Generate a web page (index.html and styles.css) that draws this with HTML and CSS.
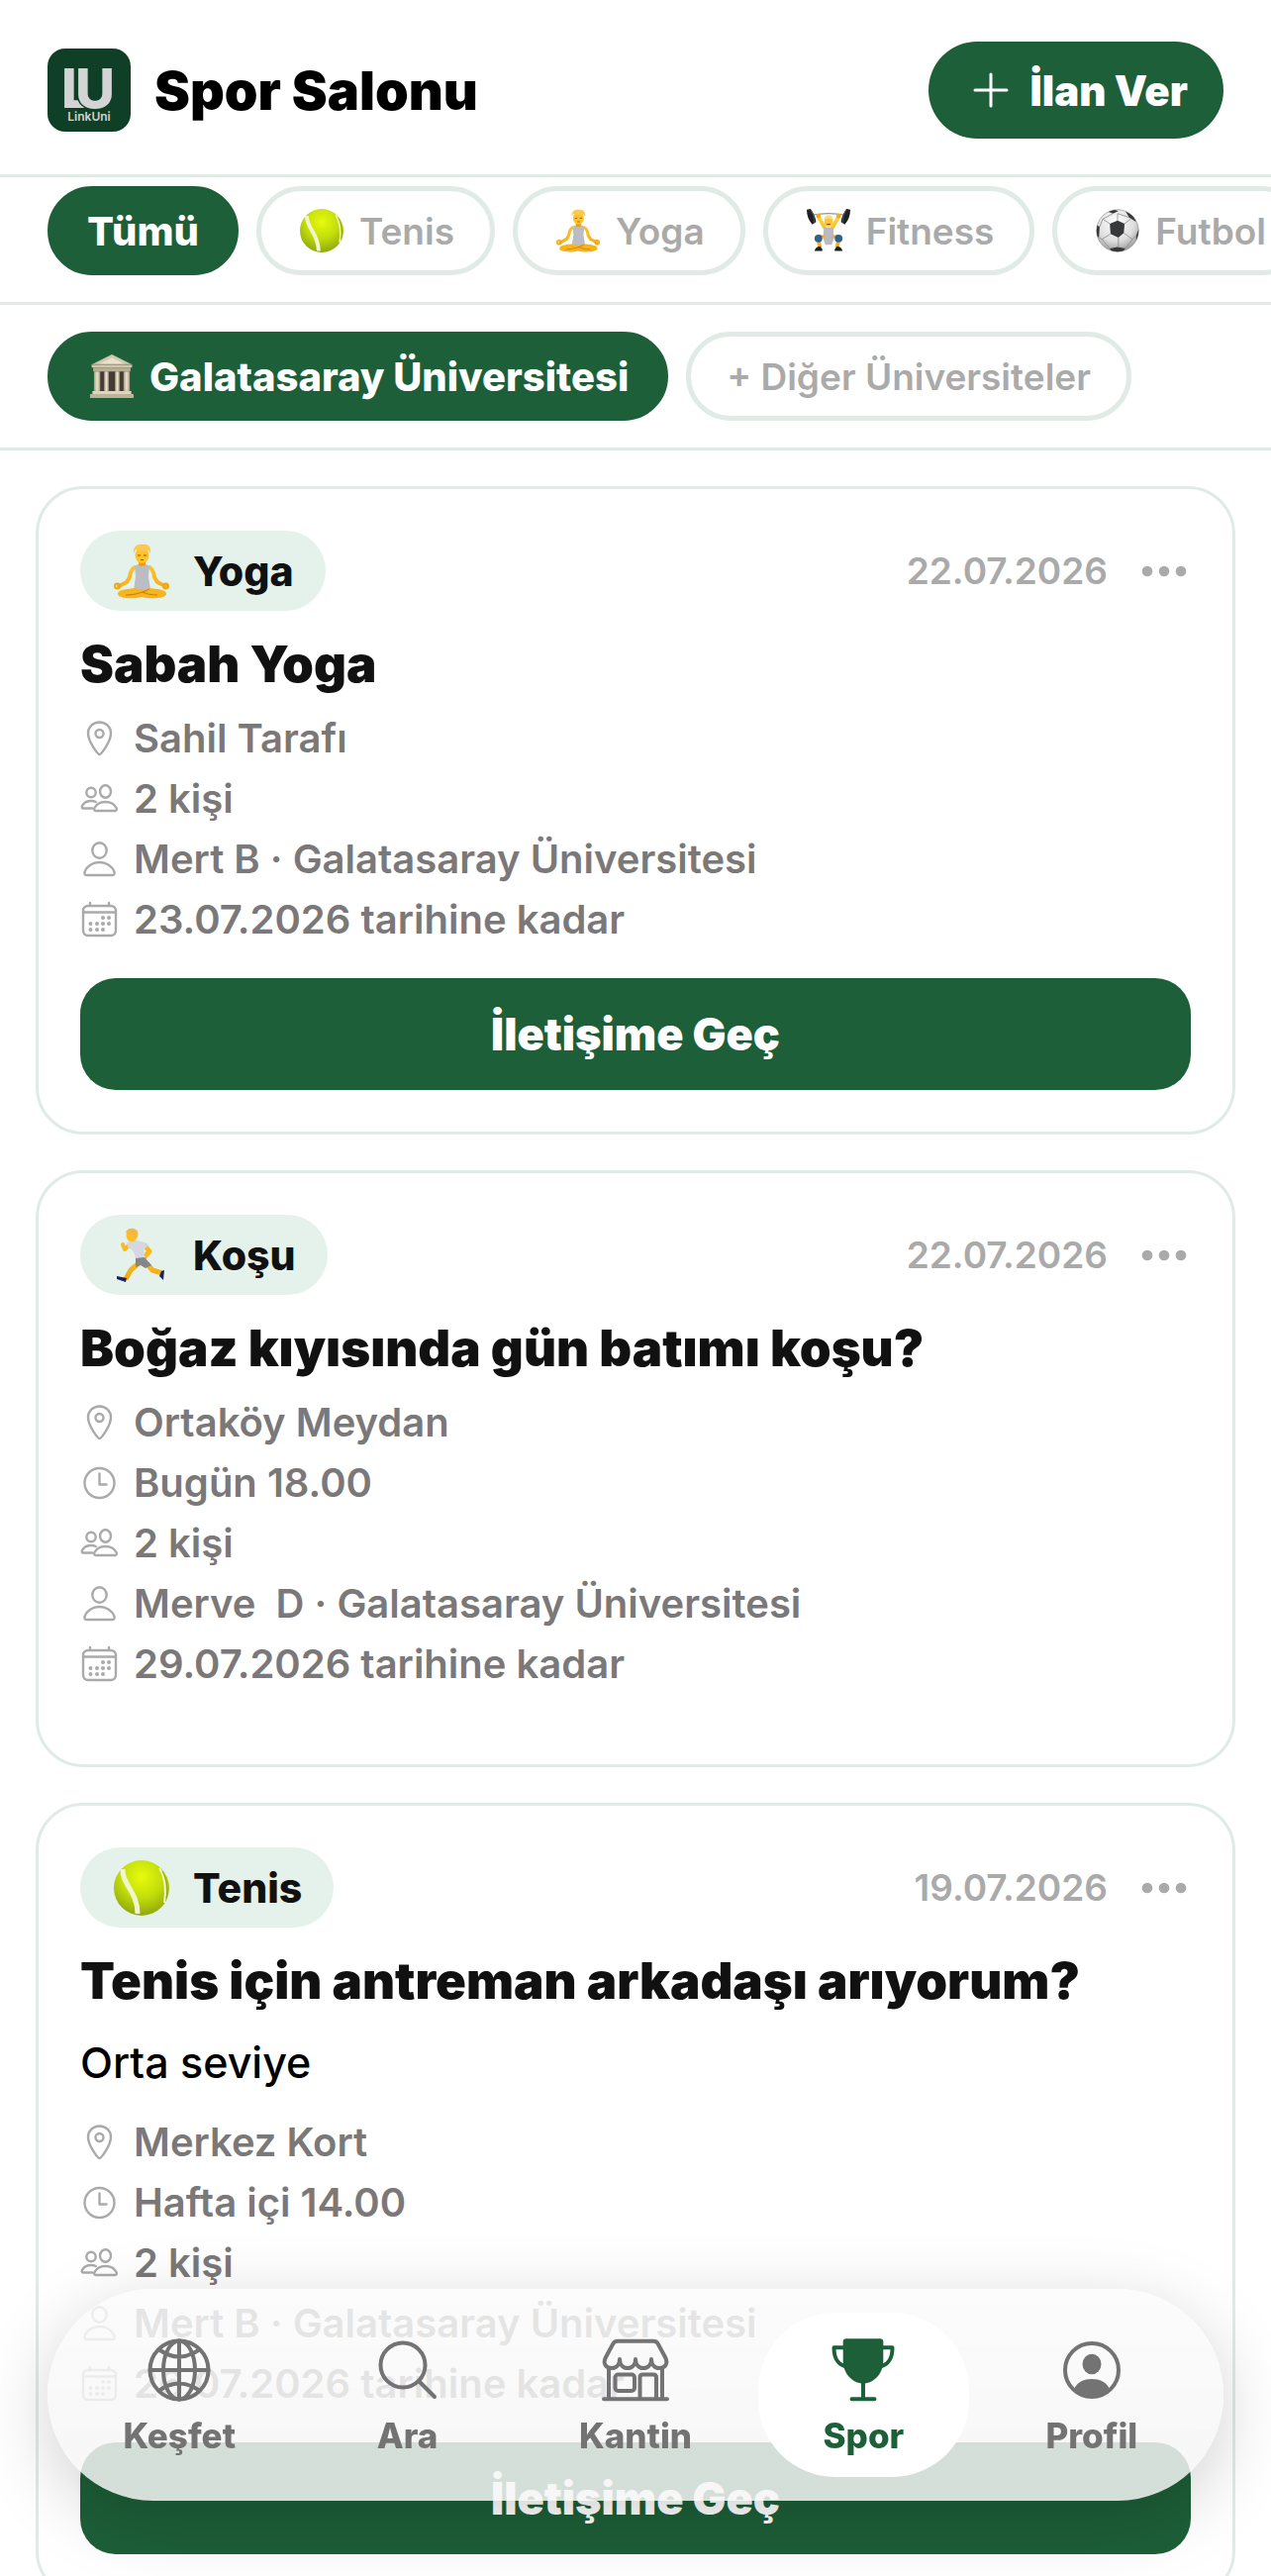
FILE: index.html
```html
<!DOCTYPE html>
<html lang="tr">
<head>
    <meta charset="UTF-8">
    <meta name="viewport" content="width=device-width, initial-scale=1.0">
    <title>Spor Salonu - LinkUni</title>
    <link rel="stylesheet" href="styles.css">
</head>
<body>

<!-- Shared icons -->
<svg class="sprite" aria-hidden="true">
    <defs>
        <radialGradient id="ball-green" cx="50%" cy="30%" r="75%">
            <stop offset="0" stop-color="#e6fb0c"/>
            <stop offset="0.5" stop-color="#c3dd0b"/>
            <stop offset="1" stop-color="#87a00f"/>
        </radialGradient>
        <radialGradient id="ball-white" cx="45%" cy="30%" r="75%">
            <stop offset="0" stop-color="#ffffff"/>
            <stop offset="0.6" stop-color="#dedede"/>
            <stop offset="1" stop-color="#8e8e8e"/>
        </radialGradient>
        <linearGradient id="skin" gradientUnits="userSpaceOnUse" x1="0" y1="10" x2="0" y2="56">
            <stop offset="0" stop-color="#ffcf3a"/>
            <stop offset="1" stop-color="#f2a60c"/>
        </linearGradient>
        <linearGradient id="stone" x1="0" y1="0" x2="1" y2="0">
            <stop offset="0" stop-color="#a39a80"/>
            <stop offset="0.5" stop-color="#ece5d0"/>
            <stop offset="1" stop-color="#a39a80"/>
        </linearGradient>
        <clipPath id="ball-clip"><circle cx="28" cy="28" r="27"/></clipPath>
    </defs>

    <symbol id="e-tennis" viewBox="0 0 56 56">
        <circle cx="28" cy="28" r="28" fill="url(#ball-green)"/>
        <path d="M9 9C8 24 24 32 24 54" fill="none" stroke="#f3f6cd" stroke-width="5"/>
        <path d="M46 8C52 17 53 32 51 43" fill="none" stroke="#f3f6cd" stroke-width="2"/>
        <path d="M49 11C54 20 55 31 53 38" fill="none" stroke="#8ba510" stroke-width="1"/>
    </symbol>

    <symbol id="e-yoga" viewBox="0 0 56 56">
        <path d="M21 24Q17 26 16 34L13 39 5 43" fill="none" stroke="url(#skin)" stroke-width="4" stroke-linecap="round" stroke-linejoin="round"/>
        <path d="M36 24Q40 26 41 34L44 39 52 43" fill="none" stroke="url(#skin)" stroke-width="4" stroke-linecap="round" stroke-linejoin="round"/>
        <path d="M25 17h7v6h-7z" fill="#e99e14"/>
        <path d="M21 23q2-1 3-2 4 4 9 0 1 1 3 2l-1 10 2 14H20l2-14z" fill="#bcbcc4"/>
        <circle cx="3.500" cy="43" r="2.500" fill="none" stroke="#f0a70f" stroke-width="2"/>
        <circle cx="52.500" cy="43" r="2.500" fill="none" stroke="#f0a70f" stroke-width="2"/>
        <path d="M4 51c0-5 12-5 17-6 6 2 11 2 15 0 6 1 17 1 17 6 0 5-18 5-25 3-7 2-24 2-24-3z" fill="#f7b51c"/>
        <path d="M12 52c8 0 16-2 24-6M44 52c-6 0-11-1-15-3" fill="none" stroke="#c9790a" stroke-width="1"/>
        <ellipse cx="28.500" cy="12" rx="7" ry="8" fill="#ffc229"/>
        <path d="M20 10c-1-6 3-10 9-9 6-1 9 3 8 9l-2-3c-4 1-9 1-13-1z" fill="#f9c855"/>
        <path d="M24 12h3M30 12h3M27 16.500h3" stroke="#8a5208" stroke-width="1"/>
    </symbol>

    <symbol id="e-lift" viewBox="0 0 56 56">
        <path d="M6 8Q28 4 50 8" fill="none" stroke="#8f959c" stroke-width="1.500"/>
        <path d="M15 10L23 24M41 10L33 24" stroke="url(#skin)" stroke-width="5" stroke-linecap="round"/>
        <circle cx="15" cy="9" r="3" fill="#f3ab14"/>
        <circle cx="41" cy="9" r="3" fill="#f3ab14"/>
        <path d="M15 40L17 50M41 40L39 50" stroke="#f5b01a" stroke-width="5"/>
        <path d="M22 24h12l1 14-3 8h-8l-3-8z" fill="#b9bac2"/>
        <ellipse cx="28" cy="16" rx="5.500" ry="7" fill="#ffc62c"/>
        <path d="M22 14q1-6 6-6t6 6q-6-3-12 0z" fill="#f6dc83"/>
        <path d="M25 19q3 3 6 0z" fill="#8b3d0a"/>
        <path d="M23 36l-8-1M33 36l8-1" stroke="#f5b01a" stroke-width="4"/>
        <circle cx="15" cy="38" r="5" fill="#2d6293"/>
        <circle cx="41" cy="38" r="5" fill="#2d6293"/>
        <path d="M10 54q1-5 7-6l3 4v2zM46 54q-1-5-7-6l-3 4v2z" fill="#1b1d22"/>
        <path d="M0 1l5-1q6 8 7 17l-5 3Q0 12 0 1zM56 1l-5-1q-6 8-7 17l5 3q7-8 7-19z" fill="#1d1f21"/>
        <path d="M5 1q5 8 5 17M51 1q-5 8-5 17" fill="none" stroke="#62676b" stroke-width="1"/>
    </symbol>

    <symbol id="e-football" viewBox="0 0 56 56">
        <circle cx="28" cy="28" r="27" fill="url(#ball-white)" stroke="#9a9a9a"/>
        <g clip-path="url(#ball-clip)">
            <path d="M18 19l10-4 9 4-1 12-7 6-10-5z" fill="#37383a"/>
            <path d="M14 3q8-4 15 0l-7 3zM38 3l10 5 4 9-9-6zM0 20l5 3-1 14-5-4zM56 24l-4 10 0 9 6-6zM18 51l10-2 10 2-5 6H22z" fill="#37383a"/>
            <path d="M28 15V6M37 19l8-6M36 31l11 8M29 37v12M19 32L8 39M18 19L9 13M5 23l4-10 13-7M43 11l-15-5M8 39l10 12M47 39l-9 12M52 34l-5 5M4 37l4 2" fill="none" stroke="#8a8a8a"/>
        </g>
    </symbol>

    <symbol id="e-museum" viewBox="0 0 56 56">
        <path d="M6 21h44v27H6z" fill="#453d35"/>
        <path d="M28 0L54 13v4H2v-4z" fill="#cfc7ae"/>
        <path d="M28 4L46 13H10z" fill="#e9e2cd"/>
        <path d="M2 13h52" stroke="#7d755f" stroke-width="1"/>
        <path d="M4 17h48v5H4z" fill="#b7ae94"/>
        <path d="M5 22h8v25H5z" fill="url(#stone)"/>
        <path d="M18 22h6v25h-6z" fill="url(#stone)"/>
        <path d="M32 22h6v25h-6z" fill="url(#stone)"/>
        <path d="M43 22h8v25h-8z" fill="url(#stone)"/>
        <path d="M3 47h50v4H3z" fill="#ddd5bd"/>
        <path d="M0 51h56v5H0z" fill="#bcb398"/>
    </symbol>

    <symbol id="e-run" viewBox="0 0 56 56">
        <path d="M33 36L39 43 49 46" fill="none" stroke="url(#skin)" stroke-width="5" stroke-linejoin="round"/>
        <path d="M25 36L17 43 12 52" fill="none" stroke="url(#skin)" stroke-width="5" stroke-linejoin="round"/>
        <path d="M14 19L11 22 9 17" fill="none" stroke="#f9b91f" stroke-width="4" stroke-linecap="round" stroke-linejoin="round"/>
        <path d="M31 18L36 24 30 31" fill="none" stroke="#f9b91f" stroke-width="5" stroke-linecap="round" stroke-linejoin="round"/>
        <path d="M13 15q8-4 18 0l3 4-4 3 2 10-10 2q0-8-4-12-4 0-5-7z" fill="#d7d8df"/>
        <path d="M22 31l9-1 7 8-6 3-5-3-5 2z" fill="#85858d"/>
        <ellipse cx="18" cy="8" rx="5.500" ry="6.500" fill="#fdbe27"/>
        <path d="M12 5q2-5 8-4 6 1 4 9l-3 1-2-5q-4 1-7-1z" fill="#f0b845"/>
        <path d="M3 49l10 2-1 4-9-3zM48 44l3-1-1 10-4-4z" fill="#1b2359"/>
    </symbol>

    <symbol id="i-pin" viewBox="0 0 38 38">
        <path d="M19.500 35C18 35 8 22.500 8 13.500a11.500 11 0 0 1 23 0C31 22.500 21 35 19.500 35z"/>
        <circle cx="19.500" cy="14" r="4"/>
    </symbol>
    <symbol id="i-clock" viewBox="0 0 38 38">
        <circle cx="19.500" cy="19" r="15"/>
        <path d="M19.500 9.500V20.500H26.500"/>
    </symbol>
    <symbol id="i-people" viewBox="0 0 38 38">
        <circle cx="11" cy="12.500" r="4.700"/>
        <ellipse cx="25.500" cy="11.500" rx="5.500" ry="6.200"/>
        <path d="M15.500 31C14 31 13.800 29.500 14.500 28 16.500 24 20.500 22 25.500 22S34.500 24 36.500 28C37.200 29.500 37 31 35.500 31z"/>
        <path d="M12 28.500H3C1.500 28.500 1.500 27 2.200 25.600 4 22.500 7 21 11 21 13 21 14.500 21.400 15.800 22"/>
    </symbol>
    <symbol id="i-person" viewBox="0 0 38 38">
        <ellipse cx="19.500" cy="10" rx="7.200" ry="7.800"/>
        <path d="M6.500 35C4.500 35 4 33.500 4.600 31.500 6.500 26 12.500 22 19.500 22S32.500 26 34.400 31.500C35 33.500 34.500 35 32.500 35z"/>
    </symbol>
    <symbol id="i-calendar" viewBox="0 0 38 38">
        <rect x="3" y="5" width="33" height="30" rx="5"/>
        <path d="M3 11.500H36M10 2V5M29 2V5"/>
        <path class="dots" d="M23 17h0M29 17h0M10.500 23h0M17 23h0M23 23h0M29 23h0M10.500 29h0M17 29h0M23 29h0"/>
    </symbol>
    <symbol id="i-more" viewBox="0 0 54 54">
        <circle cx="10" cy="27" r="5.300"/>
        <circle cx="27" cy="27" r="5.300"/>
        <circle cx="44" cy="27" r="5.300"/>
    </symbol>
</svg>

<header class="header">
    <svg class="logo" viewBox="0 0 84 84" role="img" aria-label="LinkUni">
        <rect width="84" height="84" rx="18" fill="#0f3f26"/>
        <text class="logo-letter" x="14" y="60">L</text>
        <text class="logo-letter" x="28" y="60">U</text>
        <text class="logo-name" x="42" y="73">LinkUni</text>
    </svg>
    <h1 class="page-title">Spor Salonu</h1>
    <button type="button" class="create-button">
        <svg viewBox="0 0 54 54"><path d="M27 11V43M11 27H43"/></svg>
        İlan Ver
    </button>
</header>

<div class="chip-row sports">
    <button type="button" class="chip active">Tümü</button>
    <button type="button" class="chip"><svg class="emoji"><use href="#e-tennis"/></svg>Tenis</button>
    <button type="button" class="chip"><svg class="emoji"><use href="#e-yoga"/></svg>Yoga</button>
    <button type="button" class="chip"><svg class="emoji"><use href="#e-lift"/></svg>Fitness</button>
    <button type="button" class="chip"><svg class="emoji"><use href="#e-football"/></svg>Futbol</button>
</div>

<div class="chip-row">
    <button type="button" class="chip active"><svg class="emoji"><use href="#e-museum"/></svg>Galatasaray Üniversitesi</button>
    <button type="button" class="chip">+ Diğer Üniversiteler</button>
</div>

<main class="list">
    <article class="card">
        <div class="card-top">
            <span class="badge"><svg class="badge-emoji"><use href="#e-yoga"/></svg>Yoga</span>
            <time class="date">22.07.2026</time>
            <button type="button" class="more" aria-label="Seçenekler"><svg><use href="#i-more"/></svg></button>
        </div>
        <h2 class="card-title">Sabah Yoga</h2>
        <ul class="details">
            <li><svg><use href="#i-pin"/></svg>Sahil Tarafı</li>
            <li><svg><use href="#i-people"/></svg>2 kişi</li>
            <li><svg><use href="#i-person"/></svg>Mert B · Galatasaray Üniversitesi</li>
            <li><svg><use href="#i-calendar"/></svg>23.07.2026 tarihine kadar</li>
        </ul>
        <button type="button" class="contact-button">İletişime Geç</button>
    </article>

    <article class="card">
        <div class="card-top">
            <span class="badge"><svg class="badge-emoji"><use href="#e-run"/></svg>Koşu</span>
            <time class="date">22.07.2026</time>
            <button type="button" class="more" aria-label="Seçenekler"><svg><use href="#i-more"/></svg></button>
        </div>
        <h2 class="card-title">Boğaz kıyısında gün batımı koşu?</h2>
        <ul class="details">
            <li><svg><use href="#i-pin"/></svg>Ortaköy Meydan</li>
            <li><svg><use href="#i-clock"/></svg>Bugün 18.00</li>
            <li><svg><use href="#i-people"/></svg>2 kişi</li>
            <li><svg><use href="#i-person"/></svg>Merve&nbsp; D · Galatasaray Üniversitesi</li>
            <li><svg><use href="#i-calendar"/></svg>29.07.2026 tarihine kadar</li>
        </ul>
    </article>

    <article class="card">
        <div class="card-top">
            <span class="badge"><svg class="badge-emoji"><use href="#e-tennis"/></svg>Tenis</span>
            <time class="date">19.07.2026</time>
            <button type="button" class="more" aria-label="Seçenekler"><svg><use href="#i-more"/></svg></button>
        </div>
        <h2 class="card-title">Tenis için antreman arkadaşı arıyorum?</h2>
        <p class="description">Orta seviye</p>
        <ul class="details">
            <li><svg><use href="#i-pin"/></svg>Merkez Kort</li>
            <li><svg><use href="#i-clock"/></svg>Hafta içi 14.00</li>
            <li><svg><use href="#i-people"/></svg>2 kişi</li>
            <li><svg><use href="#i-person"/></svg>Mert B · Galatasaray Üniversitesi</li>
            <li><svg><use href="#i-calendar"/></svg>26.07.2026 tarihine kadar</li>
        </ul>
        <button type="button" class="contact-button">İletişime Geç</button>
    </article>
</main>

<nav class="tab-bar">
    <a href="#kesfet" class="tab">
        <svg viewBox="0 0 66 66">
            <circle cx="33" cy="33" r="29.500"/>
            <ellipse cx="33" cy="33" rx="16" ry="29.500"/>
            <path d="M33 3.500V62.500M3.500 33H62.500M13 12.500Q33 26.500 53 12.500M13 53.500Q33 39.500 53 53.500"/>
        </svg>
        Keşfet
    </a>
    <a href="#ara" class="tab">
        <svg viewBox="0 0 66 66">
            <circle cx="28" cy="28" r="22.500"/>
            <path d="M44.500 44.500L60 60"/>
        </svg>
        Ara
    </a>
    <a href="#kantin" class="tab">
        <svg viewBox="0 0 66 66">
            <path d="M15 3.700H51Q54.500 3.700 56 7L63 20C66.500 27 62.500 31 57 31 52 31 49 27 49 22 49 27 46 31 41 31S33 27 33 22C33 27 30 31 25 31S17 27 17 22C17 27 14 31 9 31 3.500 31-.500 27 3 20L10 7Q11.500 3.700 15 3.700z"/>
            <path d="M6 31V62M60 31V62M1 62.300H65"/>
            <rect x="12.500" y="37.500" width="19.500" height="16.500" rx="3"/>
            <path d="M37.500 62V40.500Q37.500 37.500 40.500 37.500H51Q54 37.500 54 40.500V62"/>
        </svg>
        Kantin
    </a>
    <a href="#spor" class="tab current" aria-current="page">
        <svg viewBox="0 0 66 66">
            <path class="solid" d="M16 1.300H50Q53.300 1.300 53.300 4.600V24C53.300 36 44 46.500 33 46.500S12.700 36 12.700 24V4.600Q12.700 1.300 16 1.300z"/>
            <path d="M13 10.300H3.500C3.500 20 6 26 14 29M53 10.300H62.500C62.500 20 60 26 52 29M33 46V62M21.500 62.300H44.500"/>
        </svg>
        Spor
    </a>
    <a href="#profil" class="tab">
        <svg viewBox="0 0 66 66">
            <circle cx="33" cy="33" r="27"/>
            <ellipse class="solid" cx="33" cy="27" rx="9.500" ry="10.300"/>
            <path class="solid" d="M15.500 51C19 45 25 42 33 42S47 45 50.500 51C46 57 40 60 33 60S20 57 15.500 51z"/>
        </svg>
        Profil
    </a>
</nav>

</body>
</html>
```
FILE: styles.css
```css
* {
    box-sizing: border-box;
}

body {
    font-family: Inter, "Liberation Sans", sans-serif;
    margin: 0;
    padding: 0;
    height: 100vh;
    display: flex;
    flex-direction: column;
    overflow: hidden;
    background-color: #fff;
    color: #111;
}

button {
    font-family: inherit;
    border: none;
    padding: 0;
    background: none;
    cursor: pointer;
}

.sprite {
    position: absolute;
    width: 0;
    height: 0;
}

.header {
    display: flex;
    flex-shrink: 0;
    align-items: center;
    gap: 24px;
    padding: 42px 48px 36px;
    border-bottom: 3px solid #e0ebe6;
}

.logo {
    width: 84px;
    height: 84px;
}

.logo-letter {
    font-size: 55px;
    font-weight: 800;
    fill: #d4d4d4;
    stroke: #0f3f26;
    stroke-width: 3px;
    paint-order: stroke;
}

.logo-name {
    font-size: 12px;
    font-weight: 600;
    fill: #d4d4d4;
    text-anchor: middle;
}

.page-title {
    flex: 1;
    margin: 0;
    font-size: 54px;
    font-weight: 900;
    color: #000;
}

.create-button {
    display: flex;
    align-items: center;
    gap: 12px;
    height: 98px;
    padding: 0 36px;
    border-radius: 49px;
    background-color: #1d5f38;
    color: #fff;
    font-size: 42px;
    font-weight: 900;
}

.create-button svg {
    width: 54px;
    height: 54px;
    stroke: #fff;
    stroke-width: 3;
    stroke-linecap: round;
}

/* Filter chips */
.chip-row {
    display: flex;
    flex-shrink: 0;
    gap: 18px;
    padding: 27px 48px;
    overflow: hidden;
    border-bottom: 3px solid #e0ebe6;
}

.chip-row.sports {
    padding-top: 9px;
}

.chip {
    display: flex;
    flex-shrink: 0;
    align-items: center;
    gap: 13px;
    height: 90px;
    padding: 0 36px;
    border: 5px solid #e0ebe6;
    border-radius: 45px;
    background-color: #fff;
    color: #aaa;
    font-size: 37px;
    font-weight: 600;
    white-space: nowrap;
}

.chip.active {
    padding: 0 35px;
    border-color: #1d5f38;
    background-color: #1d5f38;
    color: #fff;
    font-size: 40px;
    font-weight: 800;
}

.emoji {
    width: 44px;
    height: 44px;
    margin: 0 3px;
}

/* Cards */
.list {
    flex: 1;
    min-height: 0;
    overflow-y: auto;
    scrollbar-width: none;
    padding: 36px;
}

.card {
    margin-bottom: 36px;
    padding: 42px;
    border: 3px solid #e0ebe6;
    border-radius: 48px;
    background-color: #fff;
}

.card-top {
    display: flex;
    align-items: center;
}

.badge {
    display: flex;
    align-items: center;
    gap: 24px;
    height: 81px;
    margin-right: auto;
    padding: 0 32px 0 34px;
    border-radius: 41px;
    background-color: #e5f2ec;
    font-size: 41px;
    font-weight: 800;
}

.badge-emoji {
    width: 56px;
    height: 56px;
}

.date {
    color: #aaa;
    font-size: 37px;
    font-weight: 600;
}

.more {
    margin-left: 30px;
}

.more svg {
    display: block;
    width: 54px;
    height: 54px;
    fill: #aaa;
}

.card-title {
    margin: 24px 0 20px;
    font-size: 51px;
    font-weight: 900;
    line-height: 60px;
}

.description {
    margin: 0 0 24px;
    color: #000;
    font-size: 43px;
    font-weight: 500;
    line-height: 64px;
}

.details {
    display: flex;
    flex-direction: column;
    gap: 12px;
    margin: 0 0 35px;
    padding: 0;
    list-style: none;
}

.details li {
    display: flex;
    align-items: center;
    gap: 16px;
    color: #7a7878;
    font-size: 40px;
    font-weight: 600;
    line-height: 49px;
}

.details svg {
    width: 38px;
    height: 38px;
    fill: none;
    stroke: #aaa;
    stroke-width: 2.4;
    stroke-linecap: round;
    stroke-linejoin: round;
}

.dots {
    stroke-width: 4;
}

.contact-button {
    display: block;
    width: 100%;
    height: 113px;
    border-radius: 36px;
    background-color: #1d5f38;
    color: #fff;
    font-size: 45px;
    font-weight: 900;
}

/* Floating tab bar */
.tab-bar {
    position: fixed;
    left: 48px;
    right: 48px;
    bottom: 76px;
    display: flex;
    gap: 18px;
    padding: 24px 27px;
    border-radius: 107px;
    background-image:
        linear-gradient(rgba(251, 251, 251, 0.83), rgba(251, 251, 251, 0.83)),
        linear-gradient(rgba(0, 0, 0, 0), rgba(0, 0, 0, 0.12));
    box-shadow: 0 18px 72px rgba(0, 0, 0, 0.18);
}

.tab {
    display: flex;
    flex: 1;
    flex-direction: column;
    align-items: center;
    gap: 13px;
    padding: 25px 0 22px;
    border-radius: 78px;
    color: #737373;
    font-size: 35px;
    font-weight: 800;
    line-height: 40px;
    text-decoration: none;
}

.tab.current {
    background-color: #fff;
    color: #1d5f38;
}

.tab svg {
    width: 66px;
    height: 66px;
    overflow: visible;
    fill: none;
    stroke: currentColor;
    stroke-width: 4;
    stroke-linecap: round;
    stroke-linejoin: round;
}

.tab .solid {
    fill: currentColor;
    stroke: none;
}
```
